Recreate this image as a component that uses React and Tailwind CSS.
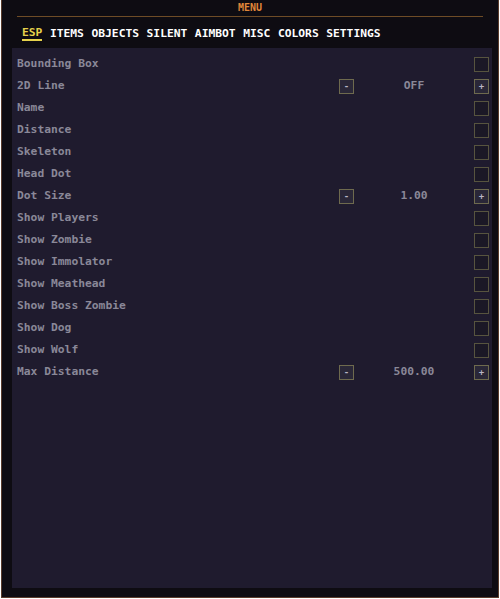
const tabs = ["ESP", "ITEMS", "OBJECTS", "SILENT", "AIMBOT", "MISC", "COLORS", "SETTINGS"];

const rows = [
  { label: "Bounding Box" },
  { label: "2D Line", value: "OFF" },
  { label: "Name" },
  { label: "Distance" },
  { label: "Skeleton" },
  { label: "Head Dot" },
  { label: "Dot Size", value: "1.00" },
  { label: "Show Players" },
  { label: "Show Zombie" },
  { label: "Show Immolator" },
  { label: "Show Meathead" },
  { label: "Show Boss Zombie" },
  { label: "Show Dog" },
  { label: "Show Wolf" },
  { label: "Max Distance", value: "500.00" },
];

function Box({ children }) {
  return (
    <div className="flex h-[15px] w-[15px] items-center justify-center border border-[#6e6a4e] bg-[#2a2738] text-[9px] leading-none text-[#b9b6c6]">
      {children}
    </div>
  );
}

function Row({ label, value }) {
  return (
    <div className="flex h-[22px] items-center">
      <span className="flex-1 text-[#8a8898]">{label}</span>
      {value ? (
        <>
          <Box>-</Box>
          <span className="w-[120px] text-center text-[#8a8898]">{value}</span>
          <Box>+</Box>
        </>
      ) : (
        <div className="h-[15px] w-[15px] border border-[#57543f] bg-[#1b1826]" />
      )}
    </div>
  );
}

export default function App() {
  return (
    <div
      className="ml-px flex h-[598px] w-[498px] flex-col border-x border-b border-[#5a3c2c] bg-[#0e0c12] text-[11.3px] font-bold"
      style={{ fontFamily: '"DejaVu Sans Mono", "Liberation Mono", monospace' }}
    >
      <div className="mx-[15px] border-b border-[#6e4c26] pt-[2px] pb-[3px] text-center text-[10px] leading-[11px] text-[#e0873a]">
        MENU
      </div>
      <div className="flex h-[31px] items-center gap-[7.5px] pl-[20px] pt-[2px] text-white">
        {tabs.map((t, i) => (
          <span
            key={t}
            className={i === 0 ? "border-b-2 border-[#e6d24c] leading-[12px] text-[#e6d24c]" : "leading-[12px]"}
          >
            {t}
          </span>
        ))}
      </div>
      <div className="ml-[10px] mr-[6px] mb-[9px] flex-1 bg-[#1f1b2e] pl-[5px] pr-[3px] pt-[5px]">
        {rows.map((r) => (
          <Row key={r.label} {...r} />
        ))}
      </div>
    </div>
  );
}
